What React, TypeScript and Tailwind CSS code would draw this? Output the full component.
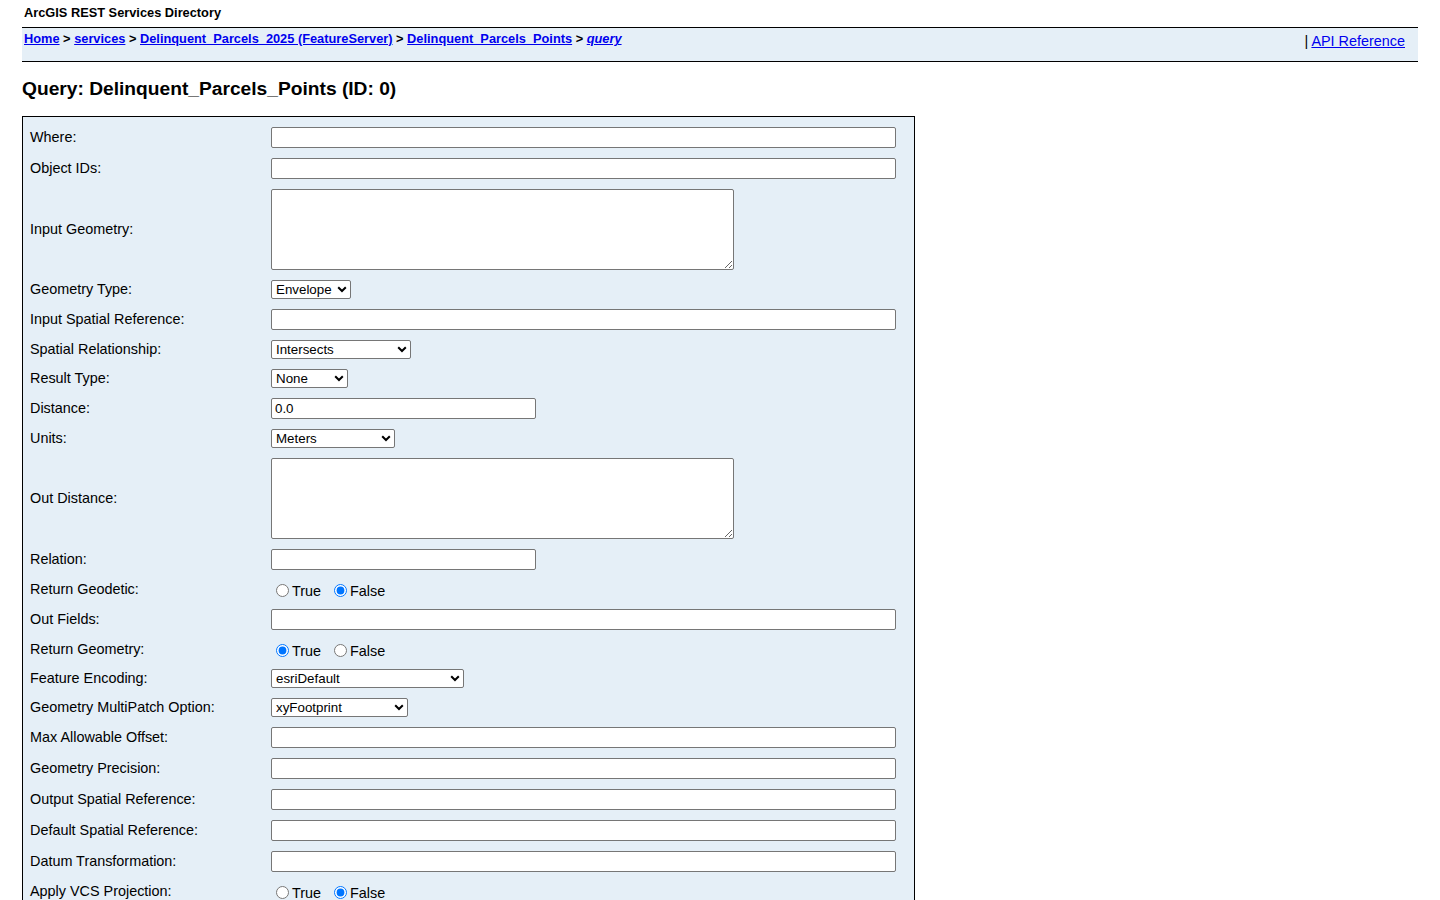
import React from "react";

type Row =
  | { label: string; kind: "input"; width: number; value?: string }
  | { label: string; kind: "textarea" }
  | { label: string; kind: "select"; width: number; value: string }
  | { label: string; kind: "radio"; checked: "true" | "false" };

const rows: Row[] = [
  { label: "Where:", kind: "input", width: 625 },
  { label: "Object IDs:", kind: "input", width: 625 },
  { label: "Input Geometry:", kind: "textarea" },
  { label: "Geometry Type:", kind: "select", width: 80, value: "Envelope" },
  { label: "Input Spatial Reference:", kind: "input", width: 625 },
  { label: "Spatial Relationship:", kind: "select", width: 140, value: "Intersects" },
  { label: "Result Type:", kind: "select", width: 77, value: "None" },
  { label: "Distance:", kind: "input", width: 265, value: "0.0" },
  { label: "Units:", kind: "select", width: 124, value: "Meters" },
  { label: "Out Distance:", kind: "textarea" },
  { label: "Relation:", kind: "input", width: 265 },
  { label: "Return Geodetic:", kind: "radio", checked: "false" },
  { label: "Out Fields:", kind: "input", width: 625 },
  { label: "Return Geometry:", kind: "radio", checked: "true" },
  { label: "Feature Encoding:", kind: "select", width: 193, value: "esriDefault" },
  { label: "Geometry MultiPatch Option:", kind: "select", width: 137, value: "xyFootprint" },
  { label: "Max Allowable Offset:", kind: "input", width: 625 },
  { label: "Geometry Precision:", kind: "input", width: 625 },
  { label: "Output Spatial Reference:", kind: "input", width: 625 },
  { label: "Default Spatial Reference:", kind: "input", width: 625 },
  { label: "Datum Transformation:", kind: "input", width: 625 },
  { label: "Apply VCS Projection:", kind: "radio", checked: "false" },
  { label: "Return IDs Only:", kind: "radio", checked: "false" },
  { label: "Return Unique IDs Only:", kind: "radio", checked: "false" },
  { label: "Return Count Only:", kind: "radio", checked: "false" },
  { label: "Return Extent Only:", kind: "radio", checked: "false" },
];

function Chevron() {
  return (
    <svg width="10" height="7" viewBox="0 0 10 7" className="pointer-events-none absolute right-[4px] top-[6px]">
      <polyline points="1.2,1.2 5,5 8.8,1.2" fill="none" stroke="#000" strokeWidth="2" />
    </svg>
  );
}

function Control({ row, idx }: { row: Row; idx: number }) {
  if (row.kind === "input") {
    return (
      <input
        type="text"
        defaultValue={row.value ?? ""}
        style={{ width: row.width }}
        className="h-[21px] rounded-[2px] border border-[#767676] bg-white px-[3px] text-[13.33px] text-black outline-none"
      />
    );
  }
  if (row.kind === "textarea") {
    return (
      <textarea className="block h-[81px] w-[463px] rounded-[2px] border border-[#767676] bg-white px-[2px] text-[13.33px] outline-none" />
    );
  }
  if (row.kind === "select") {
    return (
      <div className="relative" style={{ width: row.width }}>
        <select
          defaultValue={row.value}
          className="block h-[19px] w-full appearance-none rounded-[2px] border border-[#767676] bg-white pl-[4px] text-[13.33px] leading-[17px] text-black outline-none"
        >
          <option>{row.value}</option>
        </select>
        <Chevron />
      </div>
    );
  }
  const name = "r" + idx;
  return (
    <div className="flex h-[19px] items-center text-[14.4px] text-black">
      <label className="flex items-center">
        <input
          type="radio"
          name={name}
          defaultChecked={row.checked === "true"}
          className="ml-[5px] mr-[3px] mt-[2px] h-[13px] w-[13px]"
        />
        <span className="mt-[4px]">True</span>
      </label>
      <label className="ml-[8px] flex items-center">
        <input
          type="radio"
          name={name}
          defaultChecked={row.checked === "false"}
          className="ml-[5px] mr-[3px] mt-[2px] h-[13px] w-[13px]"
        />
        <span className="mt-[4px]">False</span>
      </label>
    </div>
  );
}

export default function App() {
  return (
    <div className="min-h-screen bg-white px-[22px] text-black" style={{ fontFamily: '"Liberation Sans", Arial, sans-serif' }}>
      <div className="h-[27px] pl-[2px] pt-[5px] text-[12.8px] font-bold leading-[16px]">ArcGIS REST Services Directory</div>
      <div className="flex h-[35px] justify-between border-y border-black bg-[#e5eff7]">
        <div className="pl-[2px] pt-[3px] text-[12.8px] font-bold leading-[15px]">
          <a href="#" className="text-[#0000ee] underline">Home</a>
          {" > "}
          <a href="#" className="text-[#0000ee] underline">services</a>
          {" > "}
          <a href="#" className="text-[#0000ee] underline">Delinquent_Parcels_2025 (FeatureServer)</a>
          {" > "}
          <a href="#" className="text-[#0000ee] underline">Delinquent_Parcels_Points</a>
          {" > "}
          <a href="#" className="italic text-[#0000ee] underline">query</a>
        </div>
        <div className="pr-[13px] pt-[5px] text-[14.4px] leading-[17px]">
          {"| "}
          <a href="#" className="text-[#0000ee] underline">API Reference</a>
        </div>
      </div>
      <h2 className="mt-[16px] text-[19.2px] font-bold leading-[22px]">Query: Delinquent_Parcels_Points (ID: 0)</h2>
      <div className="mt-[16px] w-[893px] border border-black bg-[#e5eff7] pb-[6px] pl-[7px] pt-[5px]">
        {rows.map((row, i) => (
          <div key={i} className="flex items-center py-[5px]">
            <div className="w-[241px] shrink-0 text-[14.4px] leading-[17px]">{row.label}</div>
            <Control row={row} idx={i} />
          </div>
        ))}
      </div>
    </div>
  );
}
